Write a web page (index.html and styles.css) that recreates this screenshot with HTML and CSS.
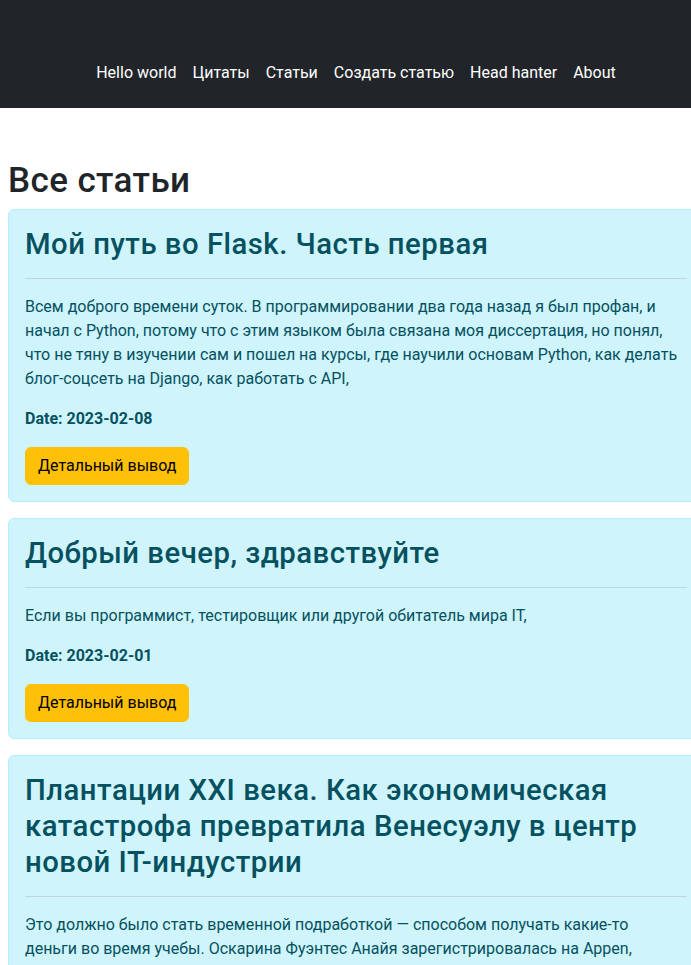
FILE: index.html
```html
<!DOCTYPE html>
<html lang="ru">
<head>
<meta charset="utf-8">
<title>Все статьи</title>
<link rel="stylesheet" href="styles.css">
</head>
<body>
<div class="page">
  <nav class="navbar">
    <ul class="nav">
      <li><a class="nav-link" href="#">Hello world</a></li>
      <li><a class="nav-link" href="#">Цитаты</a></li>
      <li><a class="nav-link" href="#">Статьи</a></li>
      <li><a class="nav-link" href="#">Создать статью</a></li>
      <li><a class="nav-link" href="#">Head hanter</a></li>
      <li><a class="nav-link" href="#">About</a></li>
    </ul>
  </nav>
  <main class="main">
    <h1 class="page-title">Все статьи</h1>

    <div class="alert">
      <h2 class="alert-heading">Мой путь во Flask. Часть первая</h2>
      <hr class="divider">
      <p class="text">Всем доброго времени суток. В программировании два года назад я был профан, и начал с Python, потому что с этим языком была связана моя диссертация, но понял, что не тяну в изучении сам и пошел на курсы, где научили основам Python, как делать блог-соцсеть на Django, как работать с API,</p>
      <p class="date">Date: 2023-02-08</p>
      <a class="btn" href="#">Детальный вывод</a>
    </div>

    <div class="alert">
      <h2 class="alert-heading">Добрый вечер, здравствуйте</h2>
      <hr class="divider">
      <p class="text">Если вы программист, тестировщик или другой обитатель мира IT,</p>
      <p class="date">Date: 2023-02-01</p>
      <a class="btn" href="#">Детальный вывод</a>
    </div>

    <div class="alert">
      <h2 class="alert-heading">Плантации XXI века. Как экономическая катастрофа превратила Венесуэлу в центр новой IT-индустрии</h2>
      <hr class="divider">
      <p class="text">Это должно было стать временной подработкой — способом получать какие-то<br>деньги во время учебы. Оскарина Фуэнтес Анайя зарегистрировалась на Appen, австралийскую платформу для разметки данных,</p>
      <p class="date">Date: 2023-01-25</p>
      <a class="btn" href="#">Детальный вывод</a>
    </div>
  </main>
</div>
</body>
</html>
```
FILE: styles.css
```css
html, body {
  overflow-x: hidden;
}
body {
  margin: 0;
  font-family: Roboto, "Liberation Sans", sans-serif;
  font-size: 16px;
  line-height: 24px;
  color: #212529;
  background: #fff;
}
.page {
  width: 712px;
}
.navbar {
  background: #212529;
  height: 108px;
  box-sizing: border-box;
  padding-top: 53px;
}
.nav {
  list-style: none;
  margin: 0;
  padding: 0;
  display: flex;
  justify-content: center;
}
.nav-link {
  display: block;
  padding: 8px;
  color: #fff;
  text-decoration: none;
  font-size: 16px;
  line-height: 24px;
}
.main {
  padding: 51.5px 8px 40px;
}
.page-title {
  margin: 0 0 8px;
  font-size: 35px;
  line-height: 41px;
  font-weight: 500;
  letter-spacing: 0.4px;
  color: #212529;
}
.alert {
  background: #cff4fc;
  border: 1px solid #b6effb;
  border-radius: 6px;
  color: #055160;
  padding: 16px;
  margin-bottom: 16px;
}
.alert-heading {
  margin: 0;
  font-size: 29.3px;
  line-height: 36px;
  font-weight: 500;
  letter-spacing: 0.5px;
  color: inherit;
}
.divider {
  margin: 16px 0;
  border: 0;
  border-top: 1px solid currentColor;
  opacity: 0.25;
}
.text {
  margin: 0 0 16px;
}
.date {
  margin: 0 0 16px;
  font-weight: 700;
}
.btn {
  display: inline-block;
  padding: 6px 12px;
  border: 1px solid #ffc107;
  border-radius: 6px;
  background: #ffc107;
  color: #000;
  text-decoration: none;
  font-size: 16px;
  line-height: 24px;
}
```
